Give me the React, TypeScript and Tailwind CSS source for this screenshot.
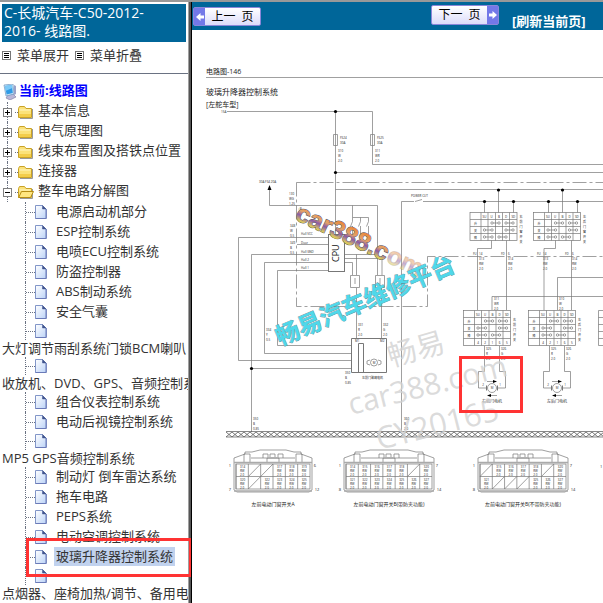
import { useState } from "react";

type Leaf = { name: string; wrapped?: boolean };

const folders = ["基本信息", "电气原理图", "线束布置图及搭铁点位置", "连接器"];

const leaves: Leaf[] = [
  { name: "电源启动机部分" },
  { name: "ESP控制系统" },
  { name: "电喷ECU控制系统" },
  { name: "防盗控制器" },
  { name: "ABS制动系统" },
  { name: "安全气囊" },
  { name: "大灯调节雨刮系统门锁BCM喇叭", wrapped: true },
  { name: "收放机、DVD、GPS、音频控制系", wrapped: true },
  { name: "组合仪表控制系统" },
  { name: "电动后视镜控制系统" },
  { name: "MP5 GPS音频控制系统", wrapped: true },
  { name: "制动灯 倒车雷达系统" },
  { name: "拖车电路" },
  { name: "PEPS系统" },
  { name: "电动空调控制系统" },
  { name: "玻璃升降器控制系统" },
  { name: "点烟器、座椅加热/调节、备用电", wrapped: true },
];

const ListIcon = () => (
  <svg width="9" height="9" viewBox="0 0 9 9" shapeRendering="crispEdges">
    <rect x=".5" y=".5" width="8" height="8" fill="#fff" stroke="#777" />
    <path d="M2 2.5h5M2 4.5h5M2 6.5h5" stroke="#000" />
  </svg>
);

const ComputerIcon = () => (
  <svg width="14" height="16" viewBox="0 0 14 16">
    <path d="M5 11l5-1 3 3-6 3-4-2z" fill="#b9b7d8" stroke="#77759d" strokeWidth=".6" />
    <path d="M1 1l9-1 1 10-8 2z" fill="#d5e9f7" stroke="#6a93bd" strokeWidth=".7" />
    <path d="M2 2l7-1 .8 8L3.600 10.500z" fill="#2f9be6" />
    <path d="M2 2l7-1 .3 3L2.500 7z" fill="#7cc9f7" />
    <path d="M11 1l2 1v8l-2 1z" fill="#9ba2c9" />
  </svg>
);

const FolderIcon = ({ open }: { open?: boolean }) => (
  <svg width="16" height="14" viewBox="0 0 16 14" className="shrink-0">
    <path d="M2 13.500h12.500V4" fill="none" stroke="#999" />
    <path d="M.5 3.500l1-2h5l1.500 2h5.500v9H.5z" fill="#fbe27a" stroke="#c9a227" />
    <path d="M1.500 5h11" stroke="#fff6c4" />
    {open ? (
      <path d="M3.500 6.500h12l-3 6H.7z" fill="#ffe680" stroke="#b58c14" />
    ) : (
      <path d="M1 9h12v3H1z" fill="#f3cd4b" />
    )}
  </svg>
);

const PageIcon = () => (
  <svg width="12" height="14" viewBox="0 0 12 14" className="shrink-0">
    <defs>
      <linearGradient id="page" x1="0" y1="0" x2="1" y2="1">
        <stop offset="0" stopColor="#fff" />
        <stop offset="1" stopColor="#bcd3f7" />
      </linearGradient>
    </defs>
    <path d="M.5.5h7l3.500 3.500v9.500H.5z" fill="url(#page)" stroke="#8296c8" />
    <path d="M11.300 4v9.500H.5" fill="none" stroke="#6a7ab8" />
    <path d="M7.500.5l3.500 3.500H7.500z" fill="#41558f" stroke="#41558f" strokeWidth=".5" />
  </svg>
);

const Toggle = ({ open }: { open?: boolean }) => (
  <svg width="9" height="9" viewBox="0 0 9 9" shapeRendering="crispEdges">
    <rect x=".5" y=".5" width="8" height="8" fill="#fff" stroke="#808080" />
    <path d={open ? "M2 4.500h5" : "M2 4.500h5M4.500 2v5"} stroke="#000" />
  </svg>
);

const FolderRow = ({ name, open }: { name: string; open?: boolean }) => (
  <li className="flex h-5 items-center">
    <button
      aria-label={name}
      className="flex h-5 w-[15px] shrink-0 flex-col items-center"
    >
      <span className="flex-1 border-l border-dotted border-gray-500" />
      <Toggle open={open} />
      <span className="flex-1 border-l border-dotted border-gray-500" />
    </button>
    <span className="w-[3px] border-t border-dotted border-gray-500" />
    <FolderIcon open={open} />
    <a href="#" className="pb-1 pl-1 leading-4">
      {name}
    </a>
  </li>
);

const Branch = ({ short }: { short?: boolean }) => (
  <span
    className={`ml-[25px] flex w-[22px] shrink-0 items-center border-l border-dotted border-gray-500 ${
      short ? "h-[18px]" : "h-5"
    }`}
  >
    <span className="flex-1 border-t border-dotted border-gray-500" />
    <PageIcon />
  </span>
);

const Sidebar = () => {
  const [selected, setSelected] = useState("玻璃升降器控制系统");

  return (
    <aside className="relative w-[192px] shrink-0 overflow-hidden border-r border-black">
      <div className="h-full overflow-hidden border-r-2 border-[#555]">
        <div className="h-full overflow-hidden whitespace-nowrap border-r border-[#a0a0a0]">
          <h1 className="mx-0.5 mt-0.5 whitespace-normal bg-[#006699] px-0.5 pb-0.5 text-[14px] leading-[18px] text-white">
            C-长城汽车-C50-2012-
            <br />
            2016- 线路图.
          </h1>
          <div className="flex h-8 items-center gap-[6px] border-b border-gray-500 pb-1 pl-0.5">
            <ListIcon />
            <button>菜单展开</button>
            <ListIcon />
            <button>菜单折叠</button>
          </div>
          <div className="mt-2 flex h-5 items-center gap-0.5 pl-[3px] font-bold text-[#0000ff]">
            <ComputerIcon />
            <span className="pb-0.5">当前:线路图</span>
          </div>
          <ul>
            {folders.map((name) => (
              <FolderRow key={name} name={name} />
            ))}
            <FolderRow name="整车电路分解图" open />
            {leaves.map((leaf) =>
              leaf.wrapped ? (
                <li key={leaf.name}>
                  <Branch short />
                  <a
                    href="#"
                    className="block h-[17px] pl-0.5 leading-[17px]"
                    onClick={() => setSelected(leaf.name)}
                  >
                    {leaf.name}
                  </a>
                </li>
              ) : (
                <li key={leaf.name} className="flex h-5">
                  <Branch />
                  <a
                    href="#"
                    className={`ml-[7px] h-[19px] px-0.5 leading-[18px] ${
                      selected === leaf.name ? "bg-[#c1d2ee]" : ""
                    }`}
                    onClick={() => setSelected(leaf.name)}
                  >
                    {leaf.name}
                  </a>
                </li>
              ),
            )}
          </ul>
        </div>
      </div>
      <div className="pointer-events-none absolute top-[536px] right-[-1px] left-[26px] h-[39px] border-3 border-[#ff3333]" />
    </aside>
  );
};

const Arrow = ({ right }: { right?: boolean }) => (
  <span className="flex w-[11px] items-center justify-center bg-[#7378e8]">
    <svg width="8" height="8" viewBox="0 0 8 8">
      <path
        d={right ? "M0 2.500h3.500V0L8 4 3.500 8V5.500H0z" : "M8 2.500H4.500V0L0 4l4.500 4V5.500H8z"}
        fill="#fff"
      />
    </svg>
  </span>
);

const Toolbar = () => (
  <header className="flex h-7 shrink-0 items-start bg-[#006699] text-[12px] text-black">
    <button className="mt-[5px] ml-px flex h-[19px] w-[68px] shrink-0 rounded-xs border border-[#8a86d8] bg-linear-to-b from-white to-[#dcdcfa]">
      <span className="flex self-stretch">
        <Arrow />
      </span>
      <span className="flex flex-1 justify-center gap-1.5 leading-[17px]">
        <span>上一</span>
        <span>页</span>
      </span>
    </button>
    <button className="mt-[3px] ml-[170px] flex h-5 w-[68px] shrink-0 rounded-xs border border-[#8a86d8] bg-linear-to-b from-white to-[#dcdcfa]">
      <span className="flex flex-1 justify-center gap-1.5 leading-[17px]">
        <span>下一</span>
        <span>页</span>
      </span>
      <span className="flex self-stretch">
        <Arrow right />
      </span>
    </button>
    <a
      href="#"
      className="mt-[10px] ml-[13px] shrink-0 text-[13px] leading-[18px] font-bold text-white"
    >
      [刷新当前页]
    </a>
  </header>
);

type Point = { x: number; y: number };

// wire number / colour / cross-section, stacked
const WireTag = ({ x, y, rows }: Point & { rows: string[] }) => (
  <text x={x} y={y} fontSize="3" fill="#222" stroke="none">
    {rows.map((row, i) => (
      <tspan key={i} x={x} y={y + i * 5}>
        {row}
      </tspan>
    ))}
  </text>
);

const Dot = ({ x, y }: Point) => (
  <circle cx={x} cy={y} r="1.600" fill="#000" stroke="none" />
);

const cols = [11, 18, 25.5, 32.5, 39.5];
const heads = ["SU", "U", "B", "D", "SD"];

type SwitchTableProps = Point & { pins?: boolean; name?: string };

const SwitchTable = ({ x, y, pins, name }: SwitchTableProps) => {
  const rows = pins ? 5 : 4;
  const height = rows * 7;
  const links = [
    [22, 29],
    [36, 43],
    [14.5, 22],
    [36, 43],
    [14.5, 22],
    [29, 36],
  ];
  return (
    <g transform={`translate(${x} ${y})`}>
      <rect width="47" height={height} />
      {cols.map((c) => (
        <path key={c} d={`M${c} 0v${height}`} />
      ))}
      {Array.from({ length: rows - 1 }, (_, i) => (
        <path key={i} d={`M0 ${(i + 1) * 7}h47`} />
      ))}
      {links.map(([a, b], i) => {
        const cy = 10.5 + Math.floor(i / 2) * 7;
        return (
          <g key={i}>
            <path d={`M${a} ${cy}H${b}`} />
            <circle cx={a} cy={cy} r="1.200" fill="#fff" />
            <circle cx={b} cy={cy} r="1.200" fill="#fff" />
          </g>
        );
      })}
      <g fontSize="3" fill="#222" stroke="none" textAnchor="middle">
        {heads.map((h, i) => (
          <text key={h} x={14.5 + i * 7.200} y="5">
            {h}
          </text>
        ))}
        {["升", "关", "降"].map((t, i) => (
          <text key={t} x="5.500" y={12 + i * 7}>
            {t}
          </text>
        ))}
        {pins &&
          ["4", "2", "1", "6", "5"].map((t, i) => (
            <text key={t} x={14.5 + i * 7.200} y="33">
              {t}
            </text>
          ))}
        {Array.from(name ?? "").map((t, i) => (
          <text key={i} x="51" y={5 + (i + (pins ? 1 : 0)) * 5}>
            {t}
          </text>
        ))}
      </g>
    </g>
  );
};

const DoorMotor = ({ x, label }: { x: number; label: string }) => (
  <g transform={`translate(${x} 0)`}>
    <path d="M-7.500 346v25.500h-6V388h8M7.500 346v25.500h6V388h-8" />
    <circle cx="0" cy="388" r="4.500" fill="#fff" />
    <path d="M-5.500 385.500v5M5.500 385.500v5" strokeWidth="1" />
    <path d="M-5 381.500h8M5 395.500h-8" />
    <path d="M1 380l4 1.500-4 1.500zM-1 394l-4 1.500 4 1.500z" fill="#000" stroke="none" />
    <g fontSize="3" fill="#333" stroke="none" textAnchor="middle">
      <text y="389">M</text>
      <text x="-9" y="386">2</text>
      <text x="8" y="386">1</text>
      <text y="403" fontSize="4">
        {label}
      </text>
    </g>
    <WireTag x={-6} y={350} rows={["325", "R", "2.0"]} />
    <WireTag x={9} y={350} rows={["326", "G", "2.0"]} />
  </g>
);

type Plug = {
  x: number;
  width: number;
  columns: number;
  label: string;
  empty: number[];
  sides: string[];
};

const plugs: Plug[] = [
  { x: 234, width: 78, columns: 6, label: "左前电动门窗开关A", empty: [1, 2, 7], sides: ["1", "6", "7", "12"] },
  { x: 344, width: 90, columns: 7, label: "左前电动门窗开关B(带防夹功能)", empty: [5], sides: ["1", "7", "8", "14"] },
  { x: 478, width: 90, columns: 7, label: "左前电动门窗开关B(不带防夹功能)", empty: [0, 5, 8, 9, 10], sides: ["1", "7", "8", "14"] },
];

const Connector = ({ x, width, columns, label, empty, sides }: Plug) => {
  const step = (width - 4) / columns;
  const mid = width / 2;
  return (
    <g transform={`translate(${x} 450)`}>
      <path
        d={`M0 13V8l11-4V2h7l8-2H${width - 26}l8 2h7v2l11 4v5M0 13v27l3 2H${
          width - 3
        }l3-2V13M10 12V4h6v8M${width - 16} 12V4h6v8M17 8h${width - 34}`}
      />
      <path d={`M${mid - 10} 8V4h5v3M${mid - 3} 7V4h5v3M${mid + 5} 7V4h5v4M${mid - 6} 12V8h12v4`} />
      <path d={`M0 12.500h${width}M0 41h${width}`} stroke="#aaa" strokeWidth="1.500" />
      <rect x="2" y="14" width={width - 4} height="25" />
      <path d={`M2 26.500h${width - 4}`} />
      {Array.from({ length: columns * 2 }, (_, i) => {
        const cx = 2 + (i % columns) * step;
        const cy = 14 + Math.floor(i / columns) * 12.5;
        return (
          <g key={i}>
            <path d={`M${cx} ${cy}v12.500`} />
            {empty.includes(i) ? (
              <path d={`M${cx} ${cy + 12.5}l${step} -12.500`} />
            ) : (
              <text fontSize="3" fill="#222" stroke="none">
                <tspan x={cx + 4} y={cy + 4}>{314 + i}</tspan>
                <tspan x={cx + 4} y={cy + 8}>RW</tspan>
                <tspan x={cx + 4} y={cy + 12}>2.0</tspan>
              </text>
            )}
          </g>
        );
      })}
      <g fontSize="4" fill="#222" stroke="none" textAnchor="middle">
        <text x="-4" y="17">{sides[0]}</text>
        <text x={width + 3} y="17">{sides[1]}</text>
        <text x="-4" y="41">{sides[2]}</text>
        <text x={width + 5} y="41">{sides[3]}</text>
        <text x={mid} y="56" fontSize="5">{label}</text>
      </g>
    </g>
  );
};

const Watermarks = () => (
  <g stroke="none">
    <g fill="#d2d2d2" fillOpacity=".8">
      <text transform="translate(391 367) rotate(-16)" fontSize="29">畅易</text>
      <text transform="translate(351 415) rotate(-14)" fontSize="30">car388.com</text>
      <text transform="translate(379 450) rotate(-14)" fontSize="31">CY20165</text>
    </g>
    <text
      transform="translate(294 219) rotate(25)"
      fontSize="25"
      fontWeight="bold"
      strokeWidth="1"
      paintOrder="stroke"
      fontFamily="Liberation Sans, sans-serif"
      fill="url(#rainbow)"
      stroke="#55555f"
    >
      car388.c
      <tspan fillOpacity=".5" strokeOpacity=".2">
        om
      </tspan>
    </text>
    <text
      transform="translate(280 346) rotate(-23)"
      fontSize="24"
      fontWeight="bold"
      strokeWidth=".7"
      paintOrder="stroke"
      fill="#4fd8ea"
      stroke="#5f8a90"
    >
      畅易汽车维修平台
    </text>
  </g>
);

const Diagram = () => (
  <svg
    width="411"
    height="573"
    viewBox="192 30 411 573"
    fill="none"
    stroke="#777"
    strokeWidth=".7"
    className="shrink-0"
    role="img"
    aria-label="玻璃升降器控制系统"
  >
    <defs>
      <linearGradient id="rainbow" x1="0" y1="0" x2="0" y2="1">
        <stop offset=".2" stopColor="#e8873a" />
        <stop offset=".45" stopColor="#e3a36a" />
        <stop offset=".6" stopColor="#8b5aa8" />
        <stop offset=".85" stopColor="#f2e34a" />
      </linearGradient>
      <pattern id="ground" x="226" y="432" width="6" height="5" patternUnits="userSpaceOnUse">
        <path d="M0 0l6 5M0 5l6-5" stroke="#555" strokeWidth=".8" />
      </pattern>
    </defs>

    <g fill="#222" stroke="none">
      <text x="206" y="74" fontSize="7">电路图-146</text>
      <text x="206" y="95" fontSize="8">玻璃升降器控制系统</text>
      <text x="206" y="107" fontSize="7">[左舵车型]</text>
      <text x="221" y="113" fontSize="3">15A</text>
      <text x="259" y="183" fontSize="3">30A FS4 20A</text>
      <text x="411" y="197" fontSize="3">POWER CUT</text>
    </g>
    <path d="M206 77.500H603" />

    {/* supply rails */}
    <path d="M227 111.500H372.500V164.500H603M335.500 111.500V235M335.500 172.500H603M335.500 189.500H603" />
    <path d="M333.500 134.500h4v11h-4zM370.500 134.500h4v11h-4z" fill="#fff" />
    <path d="M335.500 134.500v11M372.500 134.500v11" />
    <Dot x={335.5} y={111.5} />
    <Dot x={335.5} y={172.5} />
    <WireTag x={340} y={139} rows={["FS24", "30A"]} />
    <WireTag x={377} y={139} rows={["FS25", "30A"]} />
    <WireTag x={338} y={152} rows={["310", "W", "2.0"]} />
    <WireTag x={375} y={152} rows={["311", "WR", "2.0"]} />
    <path
      d="M296.500 182.500H603M296.500 182.500V306.500H427.500V256.500H603"
      strokeDasharray="14 3 3 3"
    />

    {/* control unit */}
    <path d="M269.500 190V205.500H377.500V275M352.500 205.500v12M352.500 217.500h16v4M360.500 217.500v4M352.500 217.500v4l-2 5M360.500 221.500l-2 5M368.500 221.500l-2 5M352.500 226v10M360.500 226v10M368.500 226v14M377.500 254.500H344" />
    <path d="M267.500 190l2-5 2 5z" fill="#000" stroke="none" />
    <path d="M328 237.500H238.500V360.500H352M328 254.500H251.500V432M328 262.500H264.500V353.500H352M328 270.500H277.500V345.500H352M251.500 368.500H352M297 244.500H328" />
    <path d="M344 258.500h38V275M344 262.500h8.500V275M356.500 254.500V275M356.500 288V338.500M381.500 288V338.500" />
    <rect x="328.500" y="234.500" width="16" height="37" fill="#fff" strokeWidth="1" />
    <text transform="translate(339 262) rotate(-90)" fontSize="9" fill="#111" stroke="none">
      CPU
    </text>
    <path d="M350.500 275.500h9v12h-9zM375.500 275.500h9v12h-9zM355 278v6M380 278v6" />
    <Dot x={251.5} y={368.5} />
    <WireTag x={289} y={195} rows={["130", "WG", "1.25"]} />
    <WireTag x={298} y={210} rows={["+B"]} />
    <WireTag x={290} y={227} rows={["348", "W", "0.5"]} />
    <WireTag x={290} y={244} rows={["349", "B", "0.5"]} />
    <WireTag x={301} y={235} rows={["Hall VCC"]} />
    <WireTag x={301} y={244} rows={["Door"]} />
    <WireTag x={301} y={253} rows={["Hall GND"]} />
    <WireTag x={301} y={261} rows={["Hall 2"]} />
    <WireTag x={301} y={269} rows={["Hall 1"]} />
    <WireTag x={266} y={331} rows={["334", "Y", "0.5"]} />
    <WireTag x={358} y={326} rows={["331", "R", "2.0"]} />
    <WireTag x={383} y={326} rows={["332", "G", "2.0"]} />
    <WireTag x={345} y={374} rows={["350", "B", "0.85"]} />
    <WireTag x={253} y={420} rows={["350", "B", "0.85"]} />
    <WireTag x={404} y={420} rows={["360", "B", "2.0"]} />

    {/* driver window motor */}
    <path d="M351.500 338.500h35v34h-35zM358.500 343.500h5v29h-5z" strokeWidth="1" />
    <circle cx="374" cy="362.500" r="3.500" />
    <path d="M370 360l-3 1v3l3 1M378 360l3 1v3l-3 1" />
    <g fontSize="3" fill="#222" stroke="none">
      <text x="372.700" y="363.600">M</text>
      <text x="355" y="342">M1</text>
      <text x="380" y="342">M2</text>
      <text x="362" y="379">左前门玻璃电机</text>
    </g>

    {/* door switches */}
    <path d="M401.500 432V201.500H413l1 0M415 201.500l7-2M423 201.500H603" />
    <SwitchTable x={470} y={212.5} name="右前门窗开关" />
    <SwitchTable x={533.5} y={212.5} name="左后门窗开关" />
    {[0, 64].map((dx) => (
      <g key={dx} transform={`translate(${dx} 0)`}>
        <path d="M484.500 201.500v11M498.500 189.500v23M513.500 201.500v11" />
        <Dot x={484.5} y={201.5} />
        <Dot x={498.5} y={190} />
        <Dot x={513.5} y={201.5} />
        <WireTag x={473} y={255} rows={["FU"]} />
        <WireTag x={479} y={255} rows={["14", "313", "RW", "2.0"]} />
        <WireTag x={501} y={255} rows={["FD"]} />
        <WireTag x={508} y={255} rows={["6", "314", "RW", "2.0"]} />
      </g>
    ))}
    <path d="M491.500 240.500v8H477.500V310M506.500 240.500V310M555.500 240.500v8H544V310M571.500 240.500V310M603 296.500H492V310M603 277.500H557.500V310" />
    <WireTag x={494} y={300} rows={["311", "WR", "2.0"]} />
    <WireTag x={559} y={300} rows={["310", "W", "2.0"]} />
    <SwitchTable x={463.5} y={310.5} pins name="右前门开关" />
    <SwitchTable x={528.5} y={310.5} pins name="左后门开关" />
    <path d="M603 310.500H598.500V345.500H603M598.500 317.500h5M598.500 324.500h5M598.500 331.500h5M598.500 338.500h5" />
    <DoorMotor x={492} label="右前门电机" />
    <DoorMotor x={557} label="左后门电机" />

    <rect x="226" y="432" width="380" height="5" fill="url(#ground)" stroke="none" />
    <path d="M226 431.500H603M226 437H603" stroke="#555" />

    {plugs.map((plug) => (
      <Connector key={plug.label} {...plug} />
    ))}
    <text x="600" y="468" fontSize="4" fill="#222" stroke="none">1</text>

    <Watermarks />
    <rect x="460.500" y="357.500" width="61" height="54" stroke="#ff3333" strokeWidth="3" />
  </svg>
);

const App = () => {
  return (
    <div className="flex h-screen flex-col overflow-hidden border-t-2 border-[#999] bg-white font-['Open_Sans','Noto_Sans_CJK_SC',sans-serif] text-[13px] text-[#333]">
      <div className="flex min-h-0 flex-1">
        <Sidebar />
        <main className="flex min-w-0 flex-1 flex-col overflow-hidden">
          <Toolbar />
          <Diagram />
        </main>
      </div>
    </div>
  );
};

export default App;
